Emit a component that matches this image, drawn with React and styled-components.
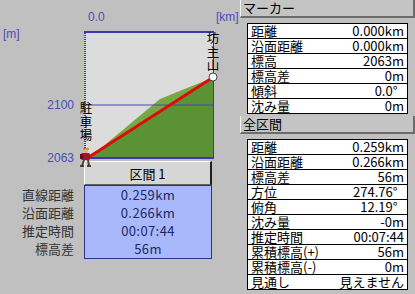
import styled, { createGlobalStyle } from "styled-components";

const GlobalStyle = createGlobalStyle`
  html, body {
    margin: 0;
    background: #c0c0c0;
    font-family: "Noto Sans CJK JP", "Liberation Sans", sans-serif;
  }
`;

const markerRows = [
  ["距離", "0.000km"],
  ["沿面距離", "0.000km"],
  ["標高", "2063m"],
  ["標高差", "0m"],
  ["傾斜", "0.0°\u2002"],
  ["沈み量", "0m"],
];

const totalRows = [
  ["距離", "0.259km"],
  ["沿面距離", "0.266km"],
  ["標高差", "56m"],
  ["方位", "274.76°\u2002"],
  ["俯角", "12.19°\u2002"],
  ["沈み量", "-0m"],
  ["推定時間", "00:07:44"],
  ["累積標高(+)", "56m"],
  ["累積標高(-)", "0m"],
  ["見通し", "見えません"],
];

const sectionRows = [
  ["直線距離", "0.259km"],
  ["沿面距離", "0.266km"],
  ["推定時間", "00:07:44"],
  ["標高差", "56m"],
];

function VerticalLabel({ x, y, text }) {
  // one glyph per line, the way the original stacks place names
  return (
    <g>
      {text.split("").map((c, i) => (
        <PlaceChar key={i} x={x} y={y + i * 13.5} textAnchor="middle">
          {c}
        </PlaceChar>
      ))}
    </g>
  );
}

function ProfileChart() {
  return (
    <ChartSvg width="238" height="161" viewBox="0 0 238 161">
      <AxisText x="88" y="21">0.0</AxisText>
      <AxisText x="216" y="21">[km]</AxisText>
      <AxisText x="3" y="38">[m]</AxisText>
      <AxisText x="74" y="109" textAnchor="end">2100</AxisText>
      <AxisText x="74" y="162" textAnchor="end">2063</AxisText>

      <rect x="84" y="31" width="129" height="128" fill="#dcdcdc" />
      {/* terrain: light above line of sight, dark below */}
      <polygon
        points="89,158 160,99 182,90 207,80 213,78 213,158"
        fill="#78a844"
      />
      <polygon points="89,158 213,78 213,158" fill="#5b9233" />
      <line x1="84" y1="105" x2="213" y2="105" stroke="#4444bb" strokeWidth="1" />

      <line x1="84" y1="32" x2="213" y2="32" stroke="#3838b0" strokeWidth="2" />
      <line x1="85" y1="31" x2="85" y2="159" stroke="#3838b0" strokeWidth="2" strokeDasharray="1 1" />
      <line x1="213.5" y1="31" x2="213.5" y2="159" stroke="#3838b0" strokeWidth="1" />
      <line x1="84" y1="158" x2="214" y2="158" stroke="#3838b0" strokeWidth="2" />

      <line x1="89" y1="157" x2="212" y2="78" stroke="#e00808" strokeWidth="2.8" />
      <circle cx="213" cy="77" r="4" fill="#fff" stroke="#222" strokeWidth="0.8" />

      <VerticalLabel x={213} y={43} text="坊主山" />
      <VerticalLabel x={86} y={113} text="駐車場" />

      {/* hiker sprite */}
      <g>
        <rect x="83" y="148" width="6" height="2" fill="#c89060" />
        <circle cx="86" cy="151.5" r="2" fill="#e8b088" />
        <rect x="81" y="153" width="9" height="7" rx="1.5" fill="#a0142c" />
        <rect x="80" y="154" width="3" height="5" fill="#6a0c1c" />
        <path d="M84 160 L82 166 M88 160 L89 166" stroke="#5a4028" strokeWidth="2" />
        <path d="M80 166 L84 166 M87 166 L91 166" stroke="#2a2018" strokeWidth="1.5" />
      </g>
    </ChartSvg>
  );
}

function InfoTable({ rows }) {
  return (
    <Table>
      {rows.map(([k, v]) => (
        <Row key={k}>
          <span>{k}</span>
          <span>{v}</span>
        </Row>
      ))}
    </Table>
  );
}

export default function App() {
  return (
    <>
      <GlobalStyle />
      <Screen>
        <LeftPane>
          <ProfileChart />
          <Summary>
            <span />
            <SectionButton>区間 1</SectionButton>
            <LabelCol>
              {sectionRows.map(([k]) => (
                <Label key={k}>{k}</Label>
              ))}
            </LabelCol>
            <BlueTable>
              {sectionRows.map(([k, v]) => (
                <BlueCell key={k}>{v}</BlueCell>
              ))}
            </BlueTable>
          </Summary>
        </LeftPane>
        <RightPane>
          <PanelHeader>マーカー</PanelHeader>
          <InfoTable rows={markerRows} />
          <PanelHeader>全区間</PanelHeader>
          <InfoTable rows={totalRows} />
        </RightPane>
      </Screen>
    </>
  );
}

const Screen = styled.div`
  display: flex;
  width: 415px;
  height: 294px;
  overflow: hidden;
`;

const LeftPane = styled.div`
  width: 238px;
  flex: none;
  display: flex;
  flex-direction: column;
`;

const ChartSvg = styled.svg`
  display: block;
  overflow: visible;
  position: relative;
  z-index: 1;
`;

const AxisText = styled.text`
  font-family: "Liberation Sans", sans-serif;
  font-size: 12px;
  fill: #4c4cb4;
`;

const PlaceChar = styled.text`
  font-size: 12.5px;
  fill: #000;
`;

const Summary = styled.div`
  display: grid;
  grid-template-columns: 84px 128px;
  grid-template-rows: 24px auto;
`;

const SectionButton = styled.div`
  box-sizing: border-box;
  height: 24px;
  display: flex;
  align-items: center;
  justify-content: center;
  background: #d6d6d6;
  border-top: 1px solid #fff;
  border-left: 1px solid #fff;
  border-right: 2px solid #202020;
  border-bottom: 1px solid #606060;
  font-size: 13px;
  color: #000;
`;

const LabelCol = styled.div`
  display: flex;
  flex-direction: column;
  padding-top: 1px;
`;

const Label = styled.div`
  height: 18px;
  line-height: 18px;
  text-align: right;
  padding-right: 10px;
  font-size: 13px;
  color: #333;
`;

const BlueTable = styled.div`
  background: #a8b8fa;
  border: 1px solid #2a3680;
  display: flex;
  flex-direction: column;
`;

const BlueCell = styled.div`
  height: 18px;
  line-height: 18px;
  text-align: center;
  font-size: 13px;
  letter-spacing: 0.4px;
  color: #1c2868;
`;

const RightPane = styled.div`
  flex: 1;
  display: flex;
  flex-direction: column;
  padding-left: 2px;
`;

const PanelHeader = styled.div`
  box-sizing: border-box;
  height: 18px;
  line-height: 16px;
  padding-left: 2px;
  font-size: 13px;
  color: #000;
  background: #c4c4c4;
  border-left: 1px solid #f4f4f4;
  border-bottom: 2px solid #6c6c6c;
  border-right: 2px solid #6c6c6c;
`;

const Table = styled.div`
  margin: 5px 7px 2px 7px;
  border: 1px solid #000;
  background: #fff;
`;

const Row = styled.div`
  display: flex;
  justify-content: space-between;
  height: 14px;
  line-height: 14px;
  padding: 0 3px;
  font-size: 13px;
  color: #000;
  white-space: nowrap;
  border-bottom: 1px solid #000;
  &:last-child {
    border-bottom: none;
  }
`;
